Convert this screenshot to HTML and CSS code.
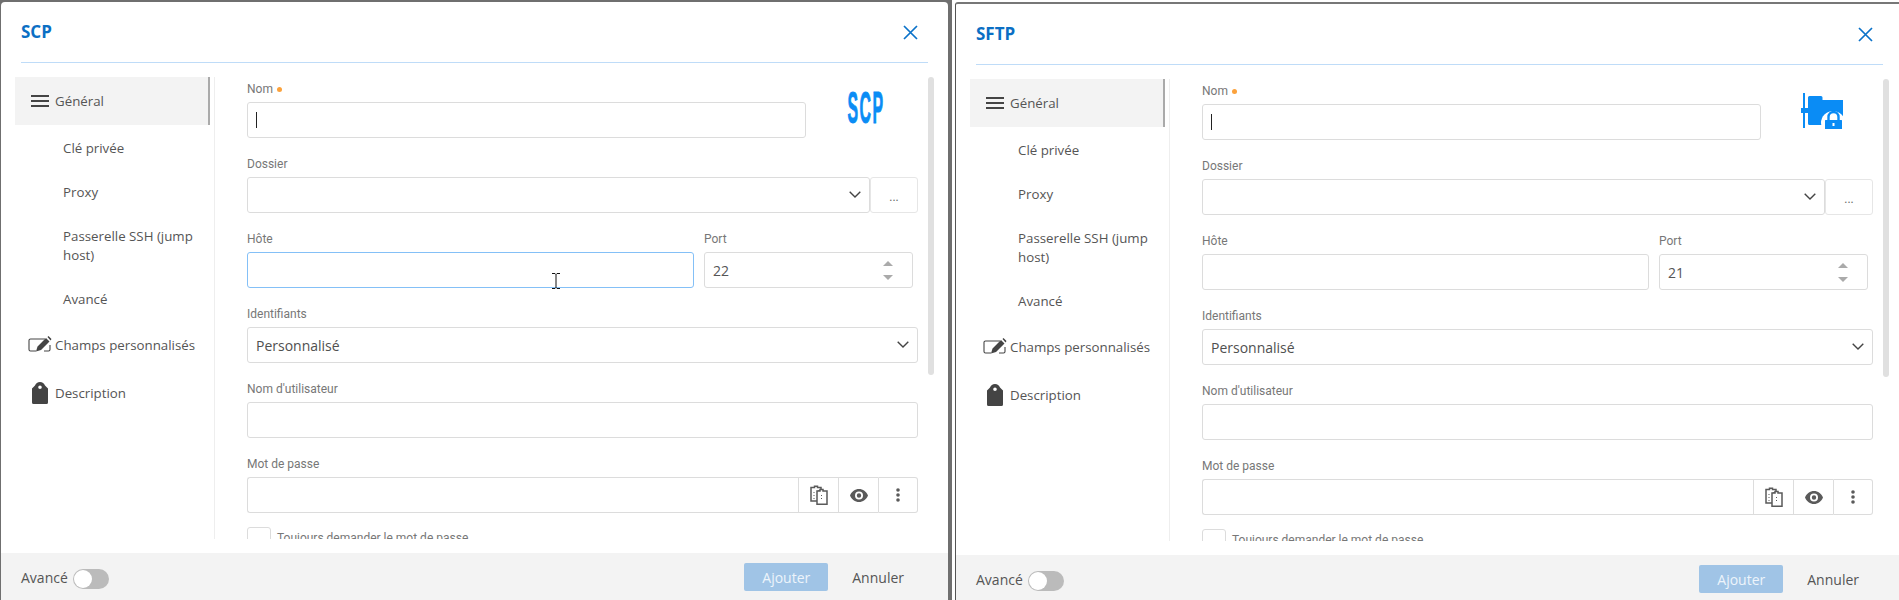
FILE: index.html
```html
<!DOCTYPE html>
<html lang="fr">
<head>
<meta charset="utf-8">
<title>SCP / SFTP</title>
<link rel="stylesheet" href="styles.css">
</head>
<body>
<svg class="defs" aria-hidden="true">
  <symbol id="i-close" viewBox="0 0 15 15"><path d="M1 1l13 13M14 1L1 14" fill="none" stroke="currentColor" stroke-width="1.7"/></symbol>
  <symbol id="i-menu" viewBox="0 0 18 12"><path d="M0 0h18v2H0zM0 5h18v2H0zM0 10h18v2H0z" fill="currentColor"/></symbol>
  <symbol id="i-edit" viewBox="0 0 24 16"><path d="M17 3H2.500A1.500 1.500 0 0 0 1 4.500v9A1.500 1.500 0 0 0 2.500 15H8M22 9v4.500a1.500 1.500 0 0 1-1.500 1.500H16" fill="none" stroke="currentColor" stroke-width="1.100"/><path d="M8 15.500l1.500-5L18 2l3.500 3.500-8.500 8.500zM19.500 1l1-1 3 3-1 1.500z" fill="currentColor"/></symbol>
  <symbol id="i-tag" viewBox="0 0 16 22"><path d="M8 0c2.500 0 4 1.500 5 3.500L15.500 6a.8.8 0 0 1 .5.800v13.700a1.500 1.500 0 0 1-1.500 1.500h-13A1.500 1.500 0 0 1 0 20.500V6.800A.8.8 0 0 1 .5 6L3 3.500C4 1.500 5.500 0 8 0zm0 3.500a1.800 1.800 0 1 0 0 3.600 1.800 1.800 0 0 0 0-3.600z" fill="currentColor" fill-rule="evenodd"/></symbol>
  <symbol id="i-chev" viewBox="0 0 12 7"><path d="M.7.7L6 6l5.300-5.300" fill="none" stroke="currentColor" stroke-width="1.400"/></symbol>
  <symbol id="i-copy" viewBox="0 0 18 20"><path d="M1 2.500h3.500V1.200h3v1.300H11V6H8.500v10H1z" fill="none" stroke="currentColor" stroke-width="1.500"/><path d="M7 6h3V4.600h3V6h4v13.300H7z" fill="#fff" stroke="currentColor" stroke-width="1.500"/><path d="M4 7v1M4 10v1M4 13v1M11.500 10v1M11.500 13v1" stroke="currentColor" stroke-width="1"/></symbol>
  <symbol id="i-eye" viewBox="0 0 18 13"><path d="M9 0c4 0 7.300 2.600 9 6.500-1.700 3.900-5 6.500-9 6.500s-7.300-2.600-9-6.500C1.700 2.600 5 0 9 0zm0 2.500a4 4 0 1 0 0 8 4 4 0 0 0 0-8zm0 1.800a2.200 2.200 0 1 1 0 4.400 2.200 2.200 0 0 1 0-4.400z" fill="currentColor" fill-rule="evenodd"/></symbol>
  <symbol id="i-more" viewBox="0 0 4 14"><circle cx="2" cy="2" r="1.800" fill="currentColor"/><circle cx="2" cy="7" r="1.800" fill="currentColor"/><circle cx="2" cy="12" r="1.800" fill="currentColor"/></symbol>
  <symbol id="i-sftp" viewBox="0 0 50 40"><g fill="#0a8cf5"><rect x="8" y="3" width="2" height="35"/><rect x="6" y="18" width="7" height="5"/><path d="M13 7.500A1.500 1.500 0 0 1 14.500 6H26a1.500 1.500 0 0 1 1.500 1.500V10H48v25H14.500a1.500 1.500 0 0 1-1.500-1.500z"/></g><circle cx="38" cy="33" r="12" fill="#fff"/><rect x="26" y="35" width="24" height="5" fill="#fff"/><path d="M33.500 30v-3a5 5 0 0 1 10 0V30" fill="none" stroke="#0a8cf5" stroke-width="2.400"/><rect x="30" y="30" width="17" height="9" rx=".5" fill="#0a8cf5"/><rect x="37.500" y="33" width="2" height="3" fill="#fff"/></symbol>
</svg>

<main class="page">
  <section class="frame frame-left">
    <div class="dialog">
      <header class="head">
        <h2 class="title">SCP</h2>
        <svg class="close"><use href="#i-close"/></svg>
      </header>
      <div class="body">
        <nav class="side">
          <div class="item active"><svg class="ic ic-menu"><use href="#i-menu"/></svg><span>Général</span></div>
          <div class="sub">Clé privée</div>
          <div class="sub">Proxy</div>
          <div class="sub">Passerelle SSH (jump host)</div>
          <div class="sub">Avancé</div>
          <div class="item"><svg class="ic ic-edit"><use href="#i-edit"/></svg><span>Champs personnalisés</span></div>
          <div class="item"><svg class="ic ic-tag"><use href="#i-tag"/></svg><span>Description</span></div>
        </nav>
        <div class="form">
          <div class="row">
            <div class="field f-name"><label class="lbl">Nom <i class="req"></i></label><div class="box"><i class="caret"></i></div></div>
            <div class="logo"><span class="scp">SCP</span></div>
          </div>
          <div class="field"><label class="lbl">Dossier</label>
            <div class="group"><div class="box grow sel"><svg class="chev"><use href="#i-chev"/></svg></div><div class="box dots">...</div></div>
          </div>
          <div class="row row-host">
            <div class="field grow"><label class="lbl">Hôte</label><div class="box focus">
              <svg class="ibeam" viewBox="0 0 8 16"><path d="M0 .5h3l1 1 1-1h3M4 1.500v13M0 15.500h3l1-1 1 1h3" fill="none" stroke="#111" stroke-width="1"/></svg>
            </div></div>
            <div class="field f-port"><label class="lbl">Port</label><div class="box val sel">22<span class="spin"><i class="up"></i><i class="down"></i></span></div></div>
          </div>
          <div class="field"><label class="lbl">Identifiants</label><div class="box val sel txt">Personnalisé<svg class="chev"><use href="#i-chev"/></svg></div></div>
          <div class="field"><label class="lbl">Nom d'utilisateur</label><div class="box"></div></div>
          <div class="field"><label class="lbl">Mot de passe</label>
            <div class="group pw"><div class="box grow"></div>
              <div class="box act"><svg class="a-copy"><use href="#i-copy"/></svg></div>
              <div class="box act"><svg class="a-eye"><use href="#i-eye"/></svg></div>
              <div class="box act"><svg class="a-more"><use href="#i-more"/></svg></div>
            </div>
          </div>
          <div class="check"><i class="cb"></i><span>Toujours demander le mot de passe</span></div>
        </div>
        <div class="thumb"></div>
      </div>
      <footer class="foot">
        <span class="adv">Avancé</span><span class="toggle"><i class="knob"></i></span>
        <span class="spacer"></span>
        <button class="btn primary">Ajouter</button><button class="btn">Annuler</button>
      </footer>
    </div>
  </section>

  <section class="frame frame-right">
    <div class="dialog">
      <header class="head">
        <h2 class="title">SFTP</h2>
        <svg class="close"><use href="#i-close"/></svg>
      </header>
      <div class="body">
        <nav class="side">
          <div class="item active"><svg class="ic ic-menu"><use href="#i-menu"/></svg><span>Général</span></div>
          <div class="sub">Clé privée</div>
          <div class="sub">Proxy</div>
          <div class="sub">Passerelle SSH (jump host)</div>
          <div class="sub">Avancé</div>
          <div class="item"><svg class="ic ic-edit"><use href="#i-edit"/></svg><span>Champs personnalisés</span></div>
          <div class="item"><svg class="ic ic-tag"><use href="#i-tag"/></svg><span>Description</span></div>
        </nav>
        <div class="form">
          <div class="row">
            <div class="field f-name"><label class="lbl">Nom <i class="req"></i></label><div class="box"><i class="caret"></i></div></div>
            <div class="logo"><svg class="sftp"><use href="#i-sftp"/></svg></div>
          </div>
          <div class="field"><label class="lbl">Dossier</label>
            <div class="group"><div class="box grow sel"><svg class="chev"><use href="#i-chev"/></svg></div><div class="box dots">...</div></div>
          </div>
          <div class="row row-host">
            <div class="field grow"><label class="lbl">Hôte</label><div class="box"></div></div>
            <div class="field f-port"><label class="lbl">Port</label><div class="box val sel">21<span class="spin"><i class="up"></i><i class="down"></i></span></div></div>
          </div>
          <div class="field"><label class="lbl">Identifiants</label><div class="box val sel txt">Personnalisé<svg class="chev"><use href="#i-chev"/></svg></div></div>
          <div class="field"><label class="lbl">Nom d'utilisateur</label><div class="box"></div></div>
          <div class="field"><label class="lbl">Mot de passe</label>
            <div class="group pw"><div class="box grow"></div>
              <div class="box act"><svg class="a-copy"><use href="#i-copy"/></svg></div>
              <div class="box act"><svg class="a-eye"><use href="#i-eye"/></svg></div>
              <div class="box act"><svg class="a-more"><use href="#i-more"/></svg></div>
            </div>
          </div>
          <div class="check"><i class="cb"></i><span>Toujours demander le mot de passe</span></div>
        </div>
        <div class="thumb"></div>
      </div>
      <footer class="foot">
        <span class="adv">Avancé</span><span class="toggle"><i class="knob"></i></span>
        <span class="spacer"></span>
        <button class="btn primary">Ajouter</button><button class="btn">Annuler</button>
      </footer>
    </div>
  </section>
</main>
</body>
</html>
```

FILE: styles.css
```css
* { box-sizing: border-box; }
html, body { margin: 0; height: 100%; overflow: hidden; background: #fff; }
body { font-family: "Open Sans", "Liberation Sans", sans-serif; font-size: 14px; color: #555; }
.defs { display: none; }

.page { display: flex; width: 1899px; height: 600px; overflow: hidden; }
.frame { flex: none; height: 600px; display: flex; }
.frame-left { width: 952px; background: #6f6f6f; padding: 2px 4px 0 1px; margin-right: 3px; }
.frame-right { width: 948px; padding-top: 2px; }
.frame-right .dialog { border-top: 2px solid #777; border-left: 1px solid #555; border-radius: 3px 0 0 0; width: 948px; }
.frame-left .dialog { border-radius: 4px 4px 0 0; }

.dialog { width: 947px; height: 100%; background: #fff; display: flex; flex-direction: column; overflow: hidden; }

.head { flex: none; height: 61px; margin: 0 20px; display: flex; align-items: center; justify-content: space-between; border-bottom: 1px solid #bfdcf8; }
.title { margin: 0; font-size: 17px; font-weight: 700; line-height: 24px; color: #0b6fc4; }
.close { width: 15px; height: 15px; color: #0b72c9; margin-right: 10px; }

.body { flex: none; height: 462px; margin-top: 14px; display: flex; overflow: hidden; }

.side { flex: none; width: 200px; margin-left: 14px; border-right: 1px solid #eee; padding-right: 4px; font-size: 13.3px; }
.item { height: 48px; display: flex; align-items: center; padding-left: 40px; position: relative; }
.item.active { background: #f3f3f3; border-right: 2px solid #aaa; }
.sub + .item { margin-top: 1px; }
.sub { padding: 14px 8px 11px 48px; line-height: 19px; }
.ic { position: absolute; color: #444; }
.ic-menu { left: 16px; top: 18px; width: 18px; height: 12px; }
.ic-edit { left: 13px; top: 15px; width: 24px; height: 16px; }
.ic-tag { left: 17px; top: 13px; width: 16px; height: 22px; }

.form { flex: none; width: 671px; margin-left: 32px; font-family: Roboto, "Liberation Sans", sans-serif; }
.row { display: flex; }
.row-host { gap: 10px; }
.field { margin-bottom: 14px; }
.grow { flex: 1; min-width: 0; }
.f-name { width: 559px; flex: none; }
.f-port { width: 209px; flex: none; margin-right: 5px; }
.lbl { display: block; height: 25px; line-height: 24px; font-size: 12px; color: #777; }
.req { display: inline-block; width: 5px; height: 5px; border-radius: 50%; background: #fba23c; vertical-align: 1px; margin-left: 1px; }
.box { position: relative; height: 36px; border: 1px solid #dcdcdc; border-radius: 3px; background: #fff; display: flex; align-items: center; padding: 0 8px; }
.box.focus { border-color: #84c0f7; }
.caret { display: block; width: 1px; height: 16px; background: #222; margin-top: -1px; }
.val { font-family: "Open Sans", sans-serif; font-size: 14px; color: #555; }
.txt { color: #505050; }
.sel { justify-content: space-between; }
.logo { flex: 1; }
.scp { display: block; font-family: "Liberation Sans", sans-serif; font-weight: 700; font-size: 44px; line-height: 44px; color: #0a8cf5; transform: scaleX(.36); -webkit-text-stroke: 1px #0a8cf5; width: 110px; margin: 9px 0 0 5px; letter-spacing: 4px; text-align: center; }
.sftp { display: block; width: 50px; height: 40px; margin: 11px 0 0 34px; }

.group { display: flex; }
.chev { width: 12px; height: 7px; color: #444; position: absolute; right: 8px; top: 13px; }
.dots { flex: none; width: 48px; justify-content: center; font-size: 12px; color: #666; padding: 3px 0 0; border-color: #e6e6e6; }
.spin { position: absolute; right: 19px; top: 8px; display: flex; flex-direction: column; gap: 9px; }
.up, .down { display: block; width: 0; height: 0; border-left: 5px solid transparent; border-right: 5px solid transparent; }
.up { border-bottom: 5px solid #aaa; }
.down { border-top: 5px solid #aaa; }
.pw .grow { border-radius: 3px 0 0 3px; border-right: 0; }
.act { flex: none; width: 40px; justify-content: center; padding: 0; border-radius: 0; border-left: 1px solid #ddd; border-right: 0; color: #5a5a5a; }
.act:last-child { border-right: 1px solid #dcdcdc; border-radius: 0 3px 3px 0; }
.a-copy { width: 18px; height: 20px; }
.a-eye { width: 18px; height: 13px; }
.a-more { width: 4px; height: 14px; }
.ibeam { position: absolute; right: 133px; top: 20px; width: 8px; height: 16px; }

.check { display: flex; align-items: flex-start; margin-top: 1px; font-size: 12px; color: #777; }
.cb { display: block; width: 24px; height: 24px; border: 1px solid #dcdcdc; border-radius: 3px; margin-right: 6px; flex: none; }
.check span { line-height: 20px; margin-top: 1px; }

.thumb { flex: none; width: 6px; height: 298px; margin-left: 10px; background: #e0e0e0; border-radius: 3px; }

.foot { flex: 1; margin-top: 14px; background: #f3f3f3; display: flex; align-items: flex-start; padding: 10px 20px 0; }
.adv { line-height: 30px; color: #555; }
.toggle { width: 36px; height: 20px; margin: 6px 0 0 5px; border-radius: 10px; background: #bbb; padding: 1px; display: block; }
.knob { display: block; width: 18px; height: 18px; border-radius: 50%; background: #fff; }
.spacer { flex: 1; }
.btn { height: 28px; border: 0; background: none; font: 14px "Open Sans", sans-serif; color: #555; padding: 0 24px; }
.btn.primary { width: 84px; padding: 0; background: #a0c4e6; color: #edf4fb; border-radius: 2px; }
```
